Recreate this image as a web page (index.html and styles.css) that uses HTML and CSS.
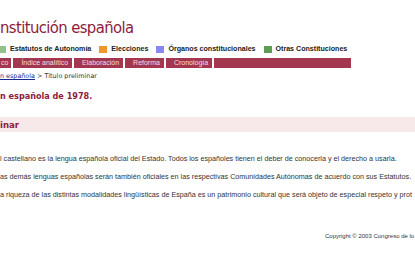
FILE: index.html
```html
<!DOCTYPE html>
<html lang="es">
<head>
    <meta charset="UTF-8">
    <meta name="viewport" content="width=device-width, initial-scale=1.0">
    <title>Constitución española</title>
    <link rel="stylesheet" href="styles.css">
</head>
<body>
    <div class="page">
        <h1 class="site-title">nstitución española</h1>

        <ul class="legend">
            <li><span class="swatch swatch-const"></span>Estatutos de Autonomía</li>
            <li><span class="swatch swatch-elec"></span>Elecciones</li>
            <li><span class="swatch swatch-org"></span>Órganos constitucionales</li>
            <li><span class="swatch swatch-other"></span>Otras Constituciones</li>
        </ul>

        <div class="menu">
            <a href="#" class="menu-first">co</a>
            <a href="#">Índice analítico</a>
            <a href="#">Elaboración</a>
            <a href="#">Reforma</a>
            <a href="#">Cronología</a>
            <span class="menu-fill"></span>
        </div>

        <p class="crumbs"><a href="#">n española</a> &gt; Título preliminar</p>

        <h2 class="doc-title">n española de 1978.</h2>

        <h3 class="band">inar</h3>

        <div class="article">
            <p>l castellano es la lengua española oficial del Estado. Todos los españoles tienen el deber de conocerla y el derecho a usarla.</p>
            <p>as demás lenguas españolas serán también oficiales en las respectivas Comunidades Autónomas de acuerdo con sus Estatutos.</p>
            <p>a riqueza de las distintas modalidades lingüísticas de España es un patrimonio cultural que será objeto de especial respeto y prot</p>
        </div>

        <p class="copy">Copyright © 2003 Congreso de lo</p>
    </div>
</body>
</html>
```

FILE: styles.css
```css
* {
    box-sizing: border-box;
}

body {
    margin: 0;
    overflow: hidden;
    background-color: white;
    font-family: "Liberation Sans", Arial, sans-serif;
    color: #333;
}

.site-title {
    margin: 0;
    padding-top: 18px;
    font-family: "DejaVu Sans Condensed", "DejaVu Sans", Verdana, sans-serif;
    font-stretch: condensed;
    font-size: 16.5px;
    font-weight: normal;
    line-height: 19px;
    color: #8c1c3c;
    letter-spacing: -0.6px;
}

.legend {
    display: flex;
    gap: 8px;
    list-style: none;
    margin: 8px 0 0 -2px;
    padding: 0;
    font-size: 7.1px;
    font-weight: bold;
    line-height: 8px;
    color: #222;
}

.legend li {
    display: flex;
    align-items: center;
    gap: 4px;
}

.swatch {
    display: inline-block;
    width: 8px;
    height: 7px;
}

.swatch-const { background-color: #94c08c; }
.swatch-elec { background-color: #f0962a; }
.swatch-org { background-color: #8888ee; }
.swatch-other { background-color: #5f9c55; }

.menu {
    display: flex;
    gap: 2px;
    width: 351px;
    margin-top: 5px;
}

.menu a,
.menu-fill {
    background-color: #a3374f;
    color: #f6dde3;
    text-decoration: none;
    font-size: 7px;
    line-height: 10px;
    padding: 0 4px 0 8px;
}

.menu .menu-first {
    padding: 0 3px 0 1px;
}

.menu-fill {
    flex: 1;
}

.crumbs {
    margin: 4px 0 0 0;
    font-family: "DejaVu Sans", Verdana, sans-serif;
    font-size: 6.4px;
    line-height: 9px;
    color: #333;
}

.crumbs a {
    color: #1a2a8c;
}

.doc-title {
    margin: 9px 0 0 0;
    font-family: "DejaVu Sans Condensed", "DejaVu Sans", Verdana, sans-serif;
    font-stretch: condensed;
    font-size: 9px;
    line-height: 12px;
    color: #8c1c3c;
}

.band {
    margin: 15px 0 0 0;
    padding: 2px 0 2px 0;
    background-color: #f7e8ea;
    font-family: "DejaVu Sans Condensed", "DejaVu Sans", Verdana, sans-serif;
    font-stretch: condensed;
    font-size: 9.5px;
    line-height: 11px;
    color: #8c1c3c;
}

.article {
    margin-top: 22px;
}

.article p {
    margin: 0 0 9px 0;
    font-size: 7.2px;
    line-height: 9px;
    color: #333;
    white-space: nowrap;
}

.copy {
    margin: 33px 0 0 325px;
    font-size: 6px;
    line-height: 8px;
    color: #333;
    white-space: nowrap;
}
```
